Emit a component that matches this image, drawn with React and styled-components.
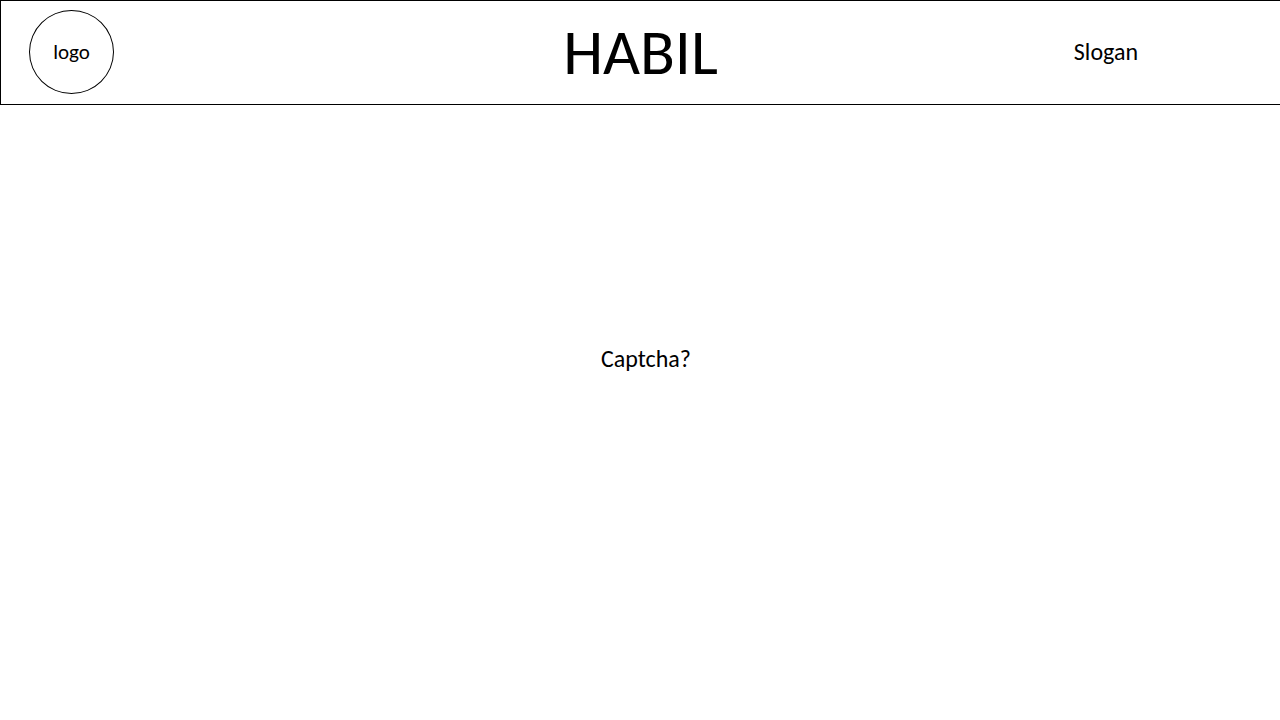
import React from "react";
import styled, { createGlobalStyle } from "styled-components";

const GlobalStyle = createGlobalStyle`
  * { box-sizing: border-box; }
  body {
    margin: 0;
    background: #fff;
    color: #000;
    font-family: Calibri, Carlito, Lato, "Open Sans", sans-serif;
  }
`;

const Page = styled.div`
  min-height: 100vh;
  display: flex;
  flex-direction: column;
`;

const Header = styled.header`
  display: grid;
  grid-template-columns: 1fr auto 1fr;
  align-items: center;
  padding: 9px 28px 10px;
  border: 1px solid #000;
  border-right: 0;
`;

const Logo = styled.a`
  display: flex;
  align-items: center;
  justify-content: center;
  width: 85px;
  height: 84px;
  border: 1px solid #000;
  border-radius: 50%;
  color: inherit;
  font-size: 21px;
  line-height: 24px;
  text-decoration: none;
`;

const Title = styled.h1`
  margin: 0;
  font-size: 64px;
  line-height: 64px;
  font-weight: 400;
`;

const Slogan = styled.p`
  justify-self: end;
  margin: 0;
  padding-right: 114px;
  font-size: 24px;
  line-height: 28px;
`;

const Main = styled.main`
  flex: 1;
  display: flex;
  justify-content: center;
  padding: 240px 0 0 12px;
`;

const Prompt = styled.p`
  margin: 0;
  font-size: 24px;
  line-height: 28px;
`;

export default function App() {
  return (
    <Page>
      <GlobalStyle />
      <Header>
        <Logo href="#">logo</Logo>
        <Title>HABIL</Title>
        <Slogan>Slogan</Slogan>
      </Header>
      <Main>
        <Prompt>Captcha?</Prompt>
      </Main>
    </Page>
  );
}
